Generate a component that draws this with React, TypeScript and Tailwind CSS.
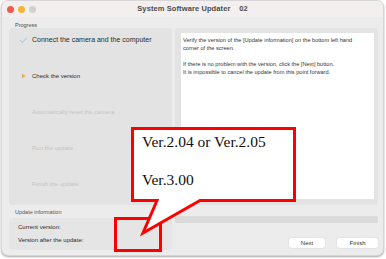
import { Check } from 'lucide-react';

export default function App() {
  const steps = [
    { label: 'Connect the camera and the computer', state: 'done' },
    { label: 'Check the version', state: 'current' },
    { label: 'Automatically reset the camera', state: 'todo' },
    { label: 'Run the update', state: 'todo' },
    { label: 'Finish the update', state: 'todo' },
  ];

  return (
    <div className="relative w-[386px] h-[259px] bg-white overflow-hidden" style={{ fontFamily: '"Liberation Sans", Arial, sans-serif' }}>
      <div className="ml-[1px] w-[383px] h-[256px] rounded-[7px] bg-[#ececec] border border-[#d6d6d6] shadow-[0_1px_2px_rgba(0,0,0,0.35)] flex flex-col overflow-hidden">
        {/* title bar */}
        <div className="relative h-[16px] shrink-0 bg-[#f3efef] flex items-center">
          <div className="flex gap-[4px] pl-[5px]">
            <span className="w-[7px] h-[7px] rounded-full bg-[#ee5a52]" />
            <span className="w-[7px] h-[7px] rounded-full bg-[#f4b534]" />
            <span className="w-[7px] h-[7px] rounded-full bg-[#d4d0d0]" />
          </div>
          <div className="absolute inset-0 flex items-center justify-center text-[7.5px] font-bold text-[#4b4b4b] tracking-[0.1px]">
            System Software Updater&nbsp;&nbsp;&nbsp;&nbsp;02
          </div>
        </div>

        <div className="pl-[13px] pt-[5px] h-[11px] text-[5.5px] text-[#4a4a4a] leading-[7px]">Progress</div>

        <div className="flex gap-[3px] pl-[7px] pr-[5px]">
          {/* left column */}
          <div className="w-[163px] flex flex-col">
            <div className="h-[177px] rounded-[3px] bg-[#e3e3e3] pt-[8px] pl-[10px] flex flex-col gap-[28px]">
              {steps.map((s) => (
                <div key={s.label} className="h-[8px] flex items-center gap-[4px]">
                  <span className="w-[9px] flex justify-center">
                    {s.state === 'done' && <Check size={11} strokeWidth={1.4} className="text-[#5d9fd6]" />}
                    {s.state === 'current' && (
                      <span className="w-0 h-0 border-y-[2.5px] border-y-transparent border-l-[4px] border-l-[#f2a54a]" />
                    )}
                  </span>
                  <span
                    className={
                      s.state === 'todo'
                        ? 'text-[6px] text-[#c4c4c4]'
                        : s.state === 'done'
                        ? 'text-[7px] text-[#2a2a2a]'
                        : 'text-[6px] text-[#2a2a2a]'
                    }
                  >
                    {s.label}
                  </span>
                </div>
              ))}
            </div>
            <div className="h-[13px] pl-[6px] pt-[4px] text-[5.5px] text-[#555] leading-[7px]">Update information</div>
            <div className="h-[32px] rounded-[3px] bg-[#e5e5e5] pl-[9px] pt-[5px] flex flex-col gap-[5px] text-[6px] text-[#2a2a2a] leading-[8px]">
              <div>Current version:</div>
              <div>Version after the update:</div>
            </div>
          </div>

          {/* right column */}
          <div className="flex-1 flex flex-col">
            <div className="h-[177px] rounded-[3px] bg-[#e3e3e3] pt-[5px] pl-[6px] pr-[4px] pb-[6px]">
              <div className="h-full bg-white pl-[2px] pr-[6px] pt-[3px] text-[5.6px] leading-[8px] text-[#333]">
                <p>Verify the version of the [Update information] on the bottom left hand corner of the screen.</p>
                <p className="mt-[8px]">
                  If there is no problem with the version, click the [Next] button.
                  <br />
                  It is impossible to cancel the update from this point forward.
                </p>
              </div>
            </div>
            <div className="mt-[11px] h-[7px] rounded-[2px] bg-[#dadada]" />
            <div className="mt-[15px] flex justify-end gap-[12px]">
              <div className="w-[36px] h-[10px] rounded-[2px] bg-white shadow-[0_0_1px_rgba(0,0,0,0.3)] flex items-center justify-center text-[6px] text-[#333]">Next</div>
              <div className="w-[41px] h-[10px] rounded-[2px] bg-white shadow-[0_0_1px_rgba(0,0,0,0.3)] flex items-center justify-center text-[6px] text-[#333]">Finish</div>
            </div>
          </div>
        </div>
      </div>

      {/* annotation overlay */}
      <div className="absolute left-[114px] top-[217px] w-[48px] h-[35px] border-[3px] border-[#ff0000]" />
      <svg className="absolute left-0 top-0 pointer-events-none" width="386" height="259" viewBox="0 0 386 259">
        <path
          d="M132.5 128.5 H294.5 V200.5 H200 L143 233 L157 200.5 H132.5 Z"
          fill="#ffffff"
          stroke="#ff0000"
          strokeWidth="3"
          strokeLinejoin="miter"
        />
      </svg>
      <div
        className="absolute left-[142px] top-[131px] text-[15.5px] leading-[22px] text-[#111]"
        style={{ fontFamily: '"Liberation Serif", "Times New Roman", serif' }}
      >
        <div>Ver.2.04 or Ver.2.05</div>
        <div className="mt-[16px]">Ver.3.00</div>
      </div>
    </div>
  );
}
